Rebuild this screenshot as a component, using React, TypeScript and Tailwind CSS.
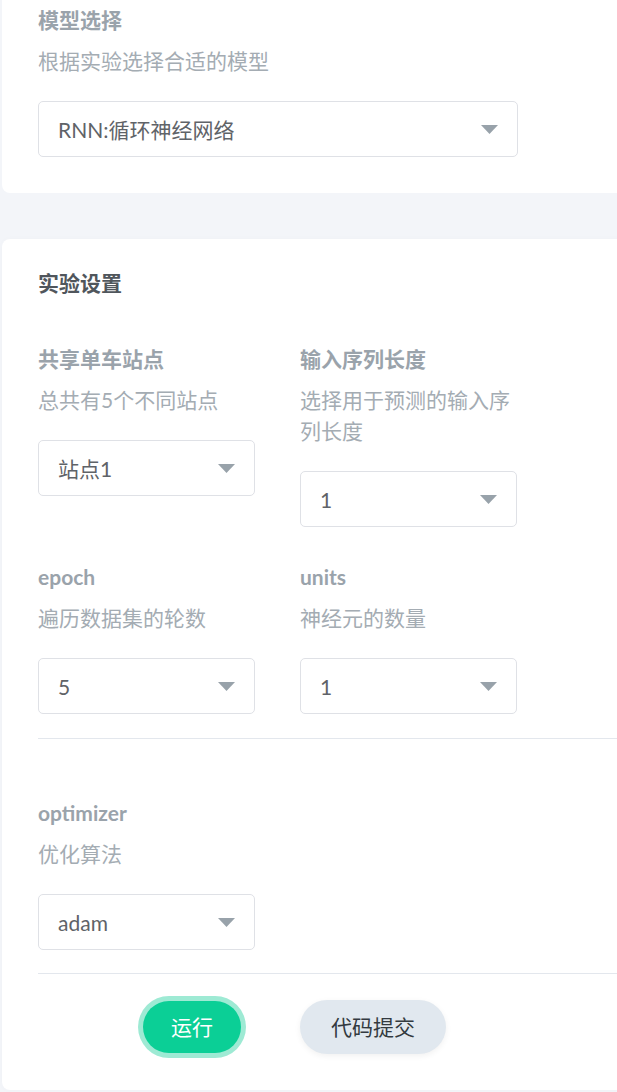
import React from "react";

const FONT = "font-['Lato','Noto_Sans_CJK_SC',sans-serif]";

function Caret() {
  return (
    <svg width="17" height="9" viewBox="0 0 17 9" className="shrink-0">
      <path d="M0 0 L17 0 L8.5 9 Z" fill="#98a2aa" />
    </svg>
  );
}

function Select({ value, wide }: { value: string; wide?: boolean }) {
  return (
    <div
      className={`${wide ? "w-[480px]" : "w-[217px]"} h-[56px] rounded-[5px] border border-[#dfe1e6] bg-white flex items-center justify-between pl-[19px] pr-[19px]`}
    >
      <span className="text-[21px] leading-[31px] text-[#5f6368]">{value}</span>
      <Caret />
    </div>
  );
}

function Field({ label, desc, value, wide }: { label: string; desc: string; value: string; wide?: boolean }) {
  return (
    <div className="flex flex-col">
      <div className="text-[21px] leading-[31px] font-bold text-[#9aa3ab]">{label}</div>
      <div className="mt-[10px] text-[21px] leading-[31px] text-[#a4acb3]">{desc}</div>
      <div className="mt-[25px]">
        <Select value={value} wide={wide} />
      </div>
    </div>
  );
}

export default function App() {
  return (
    <div className={`${FONT} w-[617px] h-[1092px] overflow-hidden bg-[#f3f5f9] pl-[2px]`}>
      <div className="-mt-[20px] bg-white rounded-b-[8px] pt-[24px] pb-[36px] pl-[36px] w-[640px]">
        <Field label="模型选择" desc="根据实验选择合适的模型" value="RNN:循环神经网络" wide />
      </div>

      <div className="mt-[46px] bg-white rounded-[8px] w-[640px] pl-[36px] pt-[28px] h-[851px] shadow-[0_0_6px_rgba(0,0,0,0.02)]">
        <div className="text-[21px] leading-[31px] font-bold text-[#50565c]">实验设置</div>

        <div className="mt-[45px] grid grid-cols-[217px_217px] gap-x-[45px] items-start">
          <Field label="共享单车站点" desc="总共有5个不同站点" value="站点1" />
          <Field label="输入序列长度" desc="选择用于预测的输入序列长度" value="1" />
        </div>

        <div className="mt-[34px] grid grid-cols-[217px_217px] gap-x-[45px] items-start">
          <Field label="epoch" desc="遍历数据集的轮数" value="5" />
          <Field label="units" desc="神经元的数量" value="1" />
        </div>

        <div className="mt-[24px] h-px bg-[#e3e7ed]" />

        <div className="mt-[58px]">
          <Field label="optimizer" desc="优化算法" value="adam" />
        </div>

        <div className="mt-[23px] h-px bg-[#e3e7ed]" />

        <div className="mt-[26px] flex items-center">
          <div className="ml-[105px] w-[98px] h-[52px] rounded-full bg-[#0bcf96] ring-[5px] ring-[#9eead4] flex items-center justify-center text-[21px] text-white">
            运行
          </div>
          <div className="ml-[59px] w-[146px] h-[54px] rounded-full bg-[#e1e8ef] shadow-[0_2px_6px_rgba(0,0,0,0.06)] flex items-center justify-center text-[21px] text-[#333a40]">
            代码提交
          </div>
        </div>
      </div>
    </div>
  );
}
